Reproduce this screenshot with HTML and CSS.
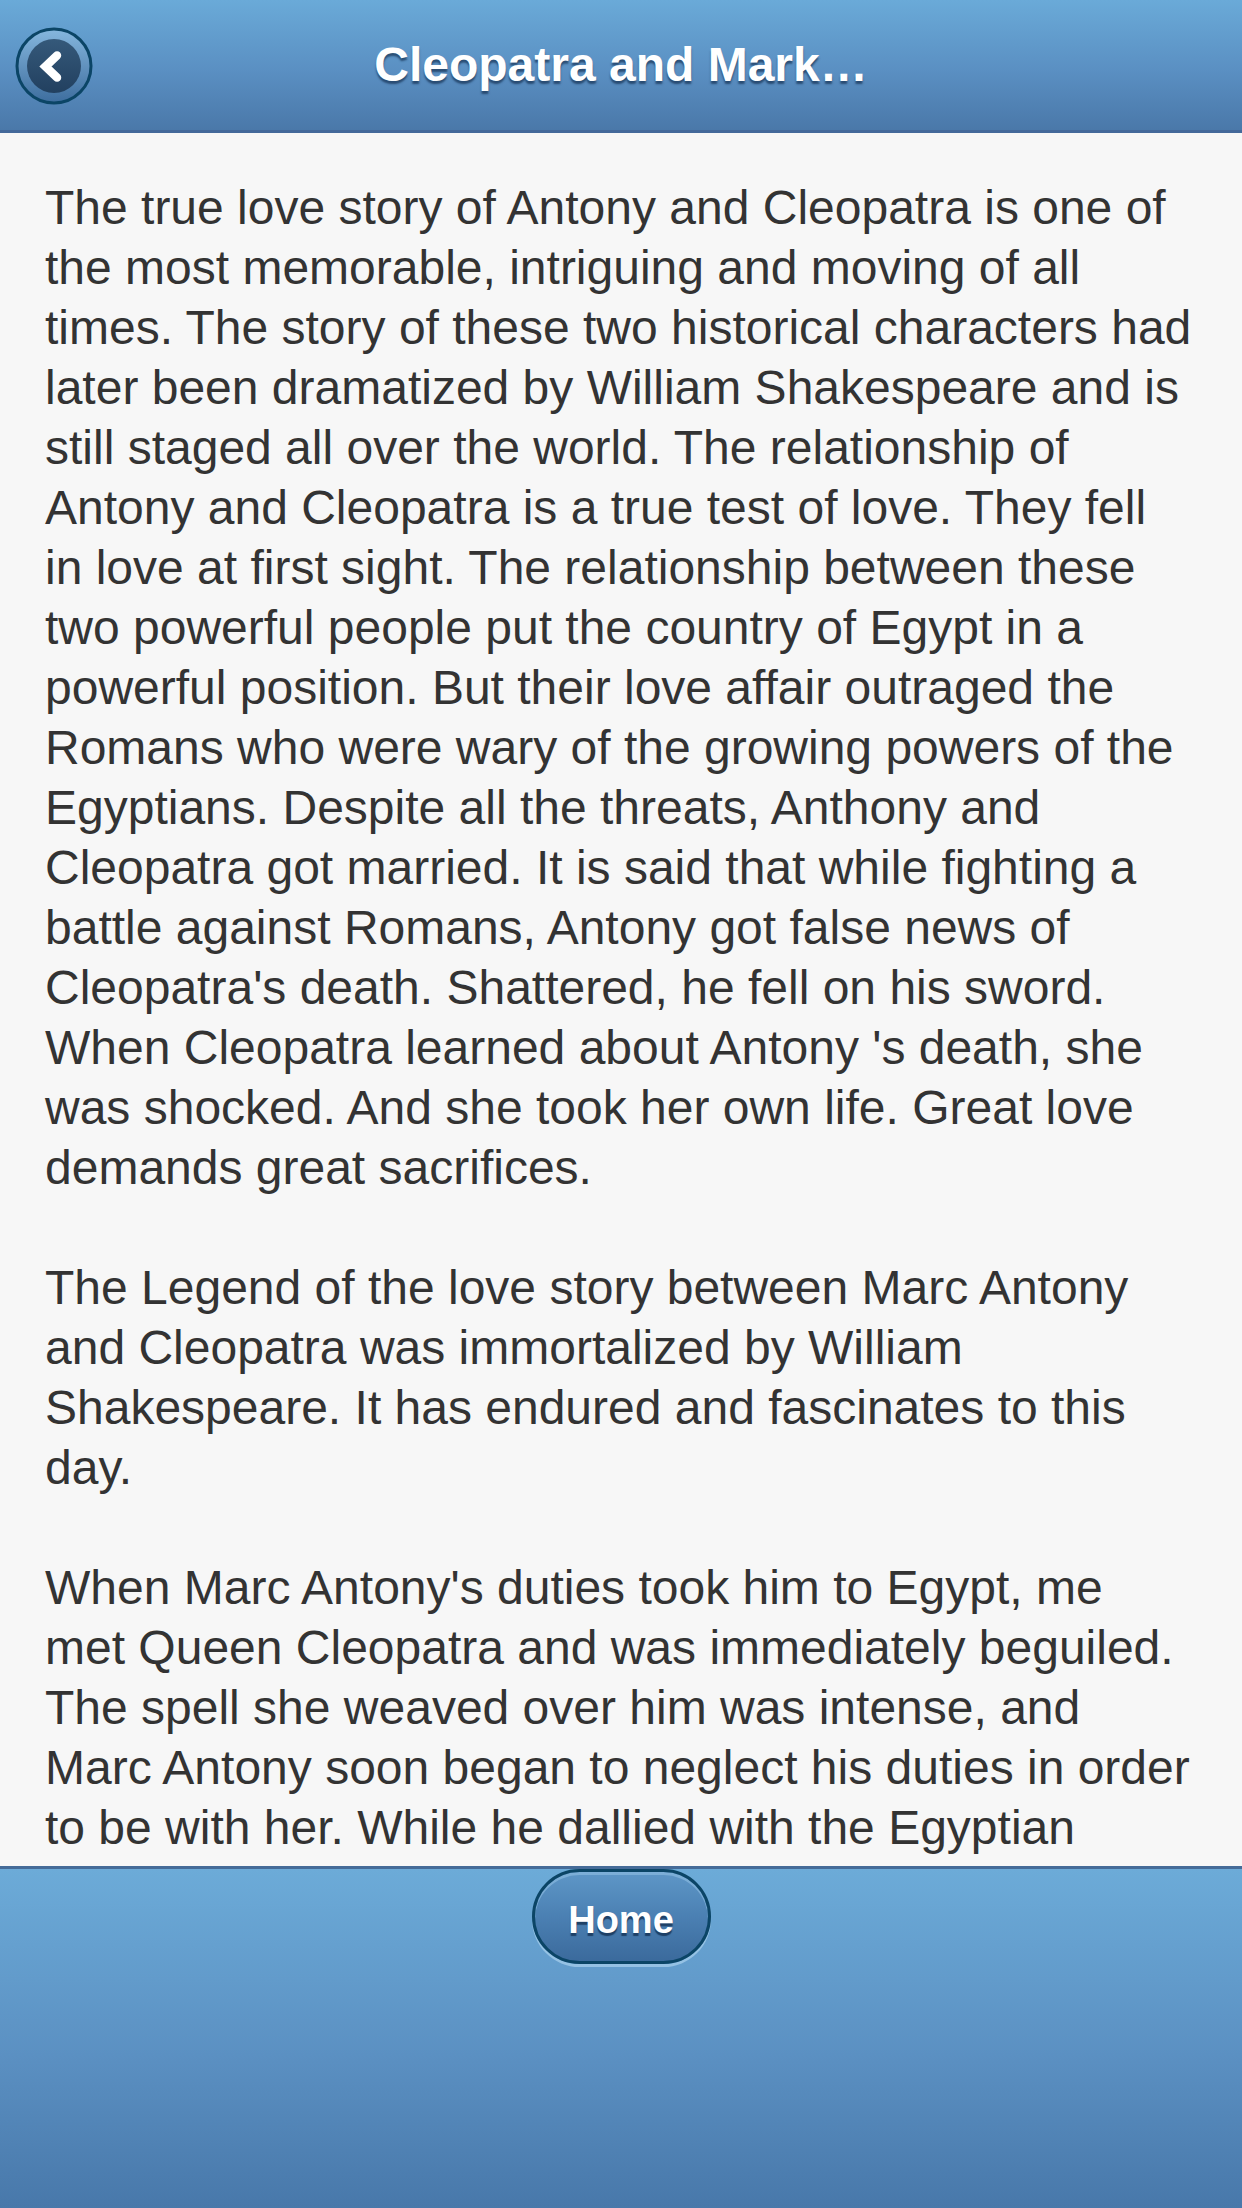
FILE: index.html
```html
<!DOCTYPE html>
<html lang="en">
<head>
<meta charset="utf-8">
<title>Cleopatra and Mark Antony</title>
<link rel="stylesheet" href="styles.css">
</head>
<body>
<div class="app">
  <header class="topbar">
    <div class="topbar-left">
      <a class="back-btn" href="#" aria-label="Back">
        <svg width="78" height="78" viewBox="0 0 78 78">
          <defs>
            <linearGradient id="ringGrad" x1="0" y1="0" x2="0" y2="1">
              <stop offset="0" stop-color="#86b7de"/>
              <stop offset="1" stop-color="#3d6d9e"/>
            </linearGradient>
            <linearGradient id="coreGrad" x1="0" y1="0" x2="0" y2="1">
              <stop offset="0" stop-color="#35597a"/>
              <stop offset="1" stop-color="#22405f"/>
            </linearGradient>
          </defs>
          <circle cx="39" cy="39" r="37" fill="url(#ringGrad)" stroke="#0b4566" stroke-width="3"/>
          <circle cx="39" cy="39" r="27" fill="url(#coreGrad)"/>
          <polyline points="42,28.5 30.5,39.5 42,50.5" fill="none" stroke="#ffffff" stroke-width="8.5" stroke-linecap="round" stroke-linejoin="miter"/>
        </svg>
      </a>
    </div>
    <h1 class="title">Cleopatra and Mark…</h1>
    <div class="topbar-right"></div>
  </header>

  <main class="content">
    <p>The true love story of Antony and Cleopatra is one of the most memorable, intriguing and moving of all times. The story of these two historical characters had later been dramatized by William Shakespeare and is still staged all over the world. The relationship of Antony and Cleopatra is a true test of love. They fell in love at first sight. The relationship between these two powerful people put the country of Egypt in a powerful position. But their love affair outraged the Romans who were wary of the growing powers of the Egyptians. Despite all the threats, Anthony and Cleopatra got married. It is said that while fighting a battle against Romans, Antony got false news of Cleopatra's death. Shattered, he fell on his sword. When Cleopatra learned about Antony 's death, she was shocked. And she took her own life. Great love demands great sacrifices.</p>
    <p>The Legend of the love story between Marc Antony and Cleopatra was immortalized by William Shakespeare. It has endured and fascinates to this day.</p>
    <p>When Marc Antony's duties took him to Egypt, me met Queen Cleopatra and was immediately beguiled. The spell she weaved over him was intense, and Marc Antony soon began to neglect his duties in order to be with her. While he dallied with the Egyptian</p>
  </main>

  <footer class="bottombar">
    <a class="home-btn" href="#">Home</a>
  </footer>
</div>
</body>
</html>
```

FILE: styles.css
```css
html, body {
  margin: 0;
  padding: 0;
}

body {
  width: 1242px;
  height: 2208px;
  overflow: hidden;
  background: #f7f7f7;
  font-family: "Liberation Sans", Arial, Helvetica, sans-serif;
}

.app {
  display: flex;
  flex-direction: column;
  height: 2208px;
}

.topbar {
  flex: 0 0 auto;
  height: 130px;
  border-bottom: 3px solid #44699a;
  background: linear-gradient(to bottom, #6aaad8 0%, #5a8fc2 55%, #4a78a9 100%);
  display: grid;
  grid-template-columns: 1fr auto 1fr;
  align-items: center;
}

.topbar-left {
  display: flex;
  align-items: center;
  padding-left: 15px;
  padding-top: 1px;
}

.back-btn {
  display: block;
  width: 78px;
  height: 78px;
}

.back-btn svg {
  display: block;
}

.title {
  margin: 0;
  color: #ffffff;
  font-size: 48px;
  font-weight: bold;
  line-height: 1;
  text-shadow: 0 3px 2px rgba(25, 55, 90, 0.75);
  white-space: nowrap;
}

.content {
  flex: 1 1 auto;
  overflow: hidden;
  padding: 45px 49px 0 45px;
  background: #f7f7f7;
  color: #333333;
  font-size: 48px;
  line-height: 60px;
}

.content p {
  margin: 0 0 60px 0;
}

.content p:last-child {
  margin-bottom: 0;
}

.bottombar {
  flex: 0 0 342px;
  border-top: 3px solid #456b98;
  box-sizing: border-box;
  background: linear-gradient(to bottom, #6cabd8 0%, #5b90c2 55%, #4878aa 100%);
  display: flex;
  justify-content: center;
  align-items: flex-start;
}

.home-btn {
  display: flex;
  align-items: center;
  justify-content: center;
  box-sizing: border-box;
  width: 179px;
  height: 95px;
  border: 3px solid #0b4566;
  border-radius: 48px;
  background: linear-gradient(to bottom, #5e97c7 0%, #4b80b3 50%, #3b6a9c 100%);
  box-shadow: inset 0 3px 0 rgba(150, 195, 230, 0.55), 0 3px 0 rgba(165, 205, 235, 0.75);
  color: #ffffff;
  font-size: 38px;
  font-weight: bold;
  text-decoration: none;
  text-shadow: 0 3px 1px rgba(20, 50, 85, 0.8);
  padding-top: 8px;
}
```
